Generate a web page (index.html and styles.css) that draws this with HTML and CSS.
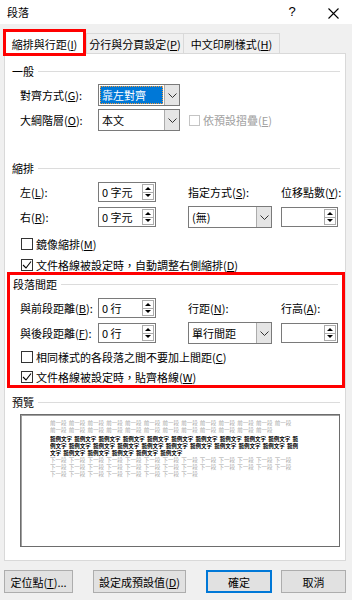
FILE: index.html
```html
<!DOCTYPE html>
<html lang="zh-Hant">
<head>
	<meta charset="UTF-8">
	<title>段落</title>
	<link rel="stylesheet" href="styles.css">
</head>
<body>
	<div id="titlebar">
		<span class="title">段落</span>
		<span class="help">?</span>
		<span class="close"><svg width="11" height="11" viewBox="0 0 11 11"><path d="M0.5 0.5 L10.5 10.5 M10.5 0.5 L0.5 10.5" stroke="#000" stroke-width="1.1"/></svg></span>
	</div>
	<div id="tabs">
		<div class="tab tab-active">縮排與行距(<u>I</u>)</div>
		<div class="tab">分行與分頁設定(<u>P</u>)</div>
		<div class="tab tab-last">中文印刷樣式(<u>H</u>)</div>
	</div>
	<div id="panel">
		<div class="group-title">一般</div>
		<div class="grid grid-general">
			<span class="label">對齊方式(<u>G</u>):</span>
			<div class="combo combo-short combo-focus">
				<span class="combo-text"><span class="sel">靠左對齊</span></span>
				<span class="combo-btn"><svg width="9" height="5" viewBox="0 0 9 5"><polyline points="0.5,0.5 4.5,4.5 8.5,0.5" fill="none" stroke="#333"/></svg></span>
			</div>
			<span></span>
			<span class="label">大綱階層(<u>O</u>):</span>
			<div class="combo combo-short">
				<span class="combo-text">本文</span>
				<span class="combo-btn"><svg width="9" height="5" viewBox="0 0 9 5"><polyline points="0.5,0.5 4.5,4.5 8.5,0.5" fill="none" stroke="#333"/></svg></span>
			</div>
			<div class="check check-off">
				<span class="box"></span>依預設摺疊(<u>E</u>)
			</div>
		</div>

		<div class="group-title group-indent">縮排</div>
		<div class="grid grid-indent">
			<span class="label">左(<u>L</u>):</span>
			<div class="spinner"><span>0 字元</span><span class="spin"><i class="up"></i><i class="down"></i></span></div>
			<span class="label">指定方式(<u>S</u>):</span>
			<span class="label">位移點數(<u>Y</u>):</span>
			<span class="label">右(<u>R</u>):</span>
			<div class="spinner"><span>0 字元</span><span class="spin"><i class="up"></i><i class="down"></i></span></div>
			<div class="combo">
				<span class="combo-text">(無)</span>
				<span class="combo-btn"><svg width="9" height="5" viewBox="0 0 9 5"><polyline points="0.5,0.5 4.5,4.5 8.5,0.5" fill="none" stroke="#333"/></svg></span>
			</div>
			<div class="spinner spinner-small"><span></span><span class="spin"><i class="up"></i><i class="down"></i></span></div>
		</div>
		<div class="check check-first"><span class="box"></span>鏡像縮排(<u>M</u>)</div>
		<div class="check check-second"><span class="box box-on"><svg width="10" height="10" viewBox="0 0 10 10"><polyline points="1,5 4,8 9,1.5" fill="none" stroke="#000" stroke-width="1.1"/></svg></span>文件格線被設定時，自動調整右側縮排(<u>D</u>)</div>

		<div id="spacing">
			<div class="group-title">段落間距</div>
			<div class="grid grid-indent">
				<span class="label">與前段距離(<u>B</u>):</span>
				<div class="spinner"><span>0 行</span><span class="spin"><i class="up"></i><i class="down"></i></span></div>
				<span class="label">行距(<u>N</u>):</span>
				<span class="label">行高(<u>A</u>):</span>
				<span class="label">與後段距離(<u>F</u>):</span>
				<div class="spinner"><span>0 行</span><span class="spin"><i class="up"></i><i class="down"></i></span></div>
				<div class="combo">
					<span class="combo-text">單行間距</span>
					<span class="combo-btn"><svg width="9" height="5" viewBox="0 0 9 5"><polyline points="0.5,0.5 4.5,4.5 8.5,0.5" fill="none" stroke="#333"/></svg></span>
				</div>
				<div class="spinner spinner-small"><span></span><span class="spin"><i class="up"></i><i class="down"></i></span></div>
			</div>
			<div class="check check-third"><span class="box"></span>相同樣式的各段落之間不要加上間距(<u>C</u>)</div>
			<div class="check check-fourth"><span class="box box-on"><svg width="10" height="10" viewBox="0 0 10 10"><polyline points="1,5 4,8 9,1.5" fill="none" stroke="#000" stroke-width="1.1"/></svg></span>文件格線被設定時，貼齊格線(<u>W</u>)</div>
		</div>

		<div class="group-title group-preview">預覽</div>
		<div id="preview">
			<div class="pv pv-gray">前一段 前一段 前一段 前一段 前一段 前一段 前一段 前一段 前一段 前一段 前一段 前一段 前一段</div>
			<div class="pv pv-gray">前一段 前一段 前一段 前一段 前一段 前一段 前一段 前一段 前一段 前一段 前一段 前一段</div>
			<div class="pv pv-black pv-first">範例文字 範例文字 範例文字 範例文字 範例文字 範例文字 範例文字 範例文字 範例文字 範例文字 範</div>
			<div class="pv pv-black">例文字 範例文字 範例文字 範例文字 範例文字 範例文字 範例文字 範例文字 範例文字 範例文字 範例</div>
			<div class="pv pv-black">文字 範例文字 範例文字 範例文字 範例文字 範例文字</div>
			<div class="pv pv-gray">下一段 下一段 下一段 下一段 下一段 下一段 下一段 下一段 下一段 下一段 下一段 下一段 下一段</div>
			<div class="pv pv-gray">下一段 下一段 下一段 下一段 下一段 下一段 下一段 下一段 下一段 下一段 下一段 下一段 下一段</div>
			<div class="pv pv-gray">下一段 下一段 下一段 下一段 下一段 下一段 下一段 下一段</div>
		</div>
	</div>
	<div id="buttons">
		<span class="btn btn-tabs">定位點(<u>T</u>)...</span>
		<span class="btn btn-default">設定成預設值(<u>D</u>)</span>
		<span class="btn btn-ok">確定</span>
		<span class="btn btn-cancel">取消</span>
	</div>
</body>
</html>
```

FILE: styles.css
```css
*{
	margin: 0;
	padding: 0;
	box-sizing: border-box;
}
body{
	width: 352px;
	height: 600px;
	background: #f0f0f0;
	font: 11px/14px "Noto Sans CJK TC", sans-serif;
	color: #000;
	overflow: hidden;
}
u{
	text-underline-offset: 1px;
}

/* title bar */
#titlebar{
	height: 24px;
	background: #fff;
	display: flex;
	align-items: center;
	padding: 0 13px 0 7px;
}
#titlebar .title{
	flex: 1;
}
#titlebar .help{
	width: 10px;
	text-align: center;
	font-size: 13px;
	font-family: "Liberation Sans", sans-serif;
}
#titlebar .close{
	margin-left: 31px;
	height: 11px;
}

/* tabs */
#tabs{
	height: 29px;
	display: flex;
	align-items: flex-end;
	padding-left: 3px;
}
.tab{
	height: 20px;
	border: 1px solid #d9d9d9;
	border-bottom: none;
	display: flex;
	align-items: center;
	justify-content: center;
	width: 98px;
	white-space: nowrap;
}
.tab-last{
	width: 97px;
	margin-left: -1px;
}
.tab-active{
	position: relative;
	z-index: 1;
	width: 83px;
	height: 27px;
	margin-bottom: -3px;
	padding-top: 2px;
	background: #fff;
	border: 3px solid #f00;
}

/* panel */
#panel{
	margin: 0 6px 0 4px;
	height: 508px;
	border: 1px solid #d9d9d9;
	background: #fff;
	padding-top: 10px;
}
.group-title{
	height: 14px;
	display: flex;
	align-items: center;
	gap: 4px;
	padding: 0 5px 0 7px;
}
.group-title::after{
	content: "";
	flex: 1;
	border-top: 1px solid #dcdcdc;
}
.group-indent{
	margin-top: 30px;
}
.group-preview{
	margin-top: 7px;
}

.grid{
	display: grid;
	grid-template-columns: 78px 90px 93px 57px;
	grid-auto-rows: 22px;
	row-gap: 3px;
	align-items: center;
	margin-top: 6px;
	padding-left: 15px;
}
.grid-general{
	grid-template-columns: 78px 91px auto;
}
.label{
	white-space: nowrap;
}

/* combobox */
.combo{
	width: 84px;
	height: 22px;
	border: 1px solid #7a7a7a;
	background: #fff;
	display: flex;
}
.combo-short{
	width: 82px;
}
.combo-text{
	flex: 1;
	display: flex;
	align-items: center;
	padding-left: 3px;
}
.combo-focus .combo-text{
	padding: 1px;
}
.combo-focus .sel{
	flex: 1;
	height: 100%;
	display: flex;
	align-items: center;
	padding-left: 2px;
	background: #0078d7;
	color: #fff;
	outline: 1px dotted #f39a3c;
	outline-offset: -1px;
}
.combo-btn{
	width: 15px;
	background: #e5e5e5;
	border-left: 1px solid #acacac;
	display: flex;
	align-items: center;
	justify-content: center;
}

/* spinner */
.spinner{
	width: 58px;
	height: 20px;
	border: 1px solid #7a7a7a;
	background: #fff;
	display: flex;
	align-items: center;
	padding-left: 3px;
}
.spinner-small{
	width: 57px;
}
.spin{
	width: 12px;
	height: 16px;
	margin: 0 1px 0 auto;
	border: 1px solid #acacac;
	display: flex;
	flex-direction: column;
}
.spin i{
	flex: 1;
	display: flex;
	align-items: center;
	justify-content: center;
}
.spin i + i{
	border-top: 1px solid #acacac;
}
.spin i::before{
	content: "";
	border-left: 3px solid transparent;
	border-right: 3px solid transparent;
}
.spin .up::before{
	border-bottom: 3px solid #000;
}
.spin .down::before{
	border-top: 3px solid #000;
}

/* checkbox */
.check{
	height: 14px;
	display: flex;
	align-items: center;
	padding-left: 16px;
	white-space: nowrap;
}
.check .box{
	width: 12px;
	height: 12px;
	border: 1px solid #333;
	background: #fff;
	margin-right: 3px;
	display: flex;
	align-items: center;
	justify-content: center;
}
.check-off{
	padding-left: 0;
	color: #a0a0a0;
}
.check-off .box{
	width: 11px;
	height: 11px;
	border-color: #c4c4c4;
}
.check-first{
	margin-top: 9px;
}
.check-second{
	margin-top: 7px;
}

/* spacing (marked) */
#spacing{
	margin-left: 2px;
	border: 3px solid #f00;
	padding: 2px 0 1px;
}
#spacing .group-title{
	padding: 0 4px 0 3px;
}
#spacing .grid{
	padding-left: 10px;
}
#spacing .check{
	padding-left: 11px;
	margin-top: 6px;
}

/* preview */
#preview{
	margin: 5px 0 0 15px;
	width: 320px;
	height: 133px;
	border: 1px solid #6d6d6d;
	box-shadow: inset 1px 1px 0 #a0a0a0;
	background: #fff;
	padding: 5px 0 0 29px;
}
.pv{
	font-size: 5.5px;
	line-height: 7px;
	height: 7px;
	white-space: nowrap;
	overflow: hidden;
	word-spacing: 1px;
}
.pv-gray{
	color: #a6a6a6;
}
.pv-black{
	color: #000;
	font-weight: bold;
}
.pv-first{
	margin-top: 2px;
}

/* buttons */
#buttons{
	display: flex;
	margin-top: 9px;
	padding-left: 4px;
}
.btn{
	height: 23px;
	background: #e1e1e1;
	border: 1px solid #adadad;
	display: flex;
	align-items: center;
	justify-content: center;
	white-space: nowrap;
}
.btn-tabs{
	width: 69px;
}
.btn-default{
	width: 93px;
	margin-left: 20px;
}
.btn-ok{
	width: 66px;
	margin-left: 20px;
	border: 2px solid #0078d7;
}
.btn-cancel{
	width: 65px;
	margin-left: 9px;
}
```
